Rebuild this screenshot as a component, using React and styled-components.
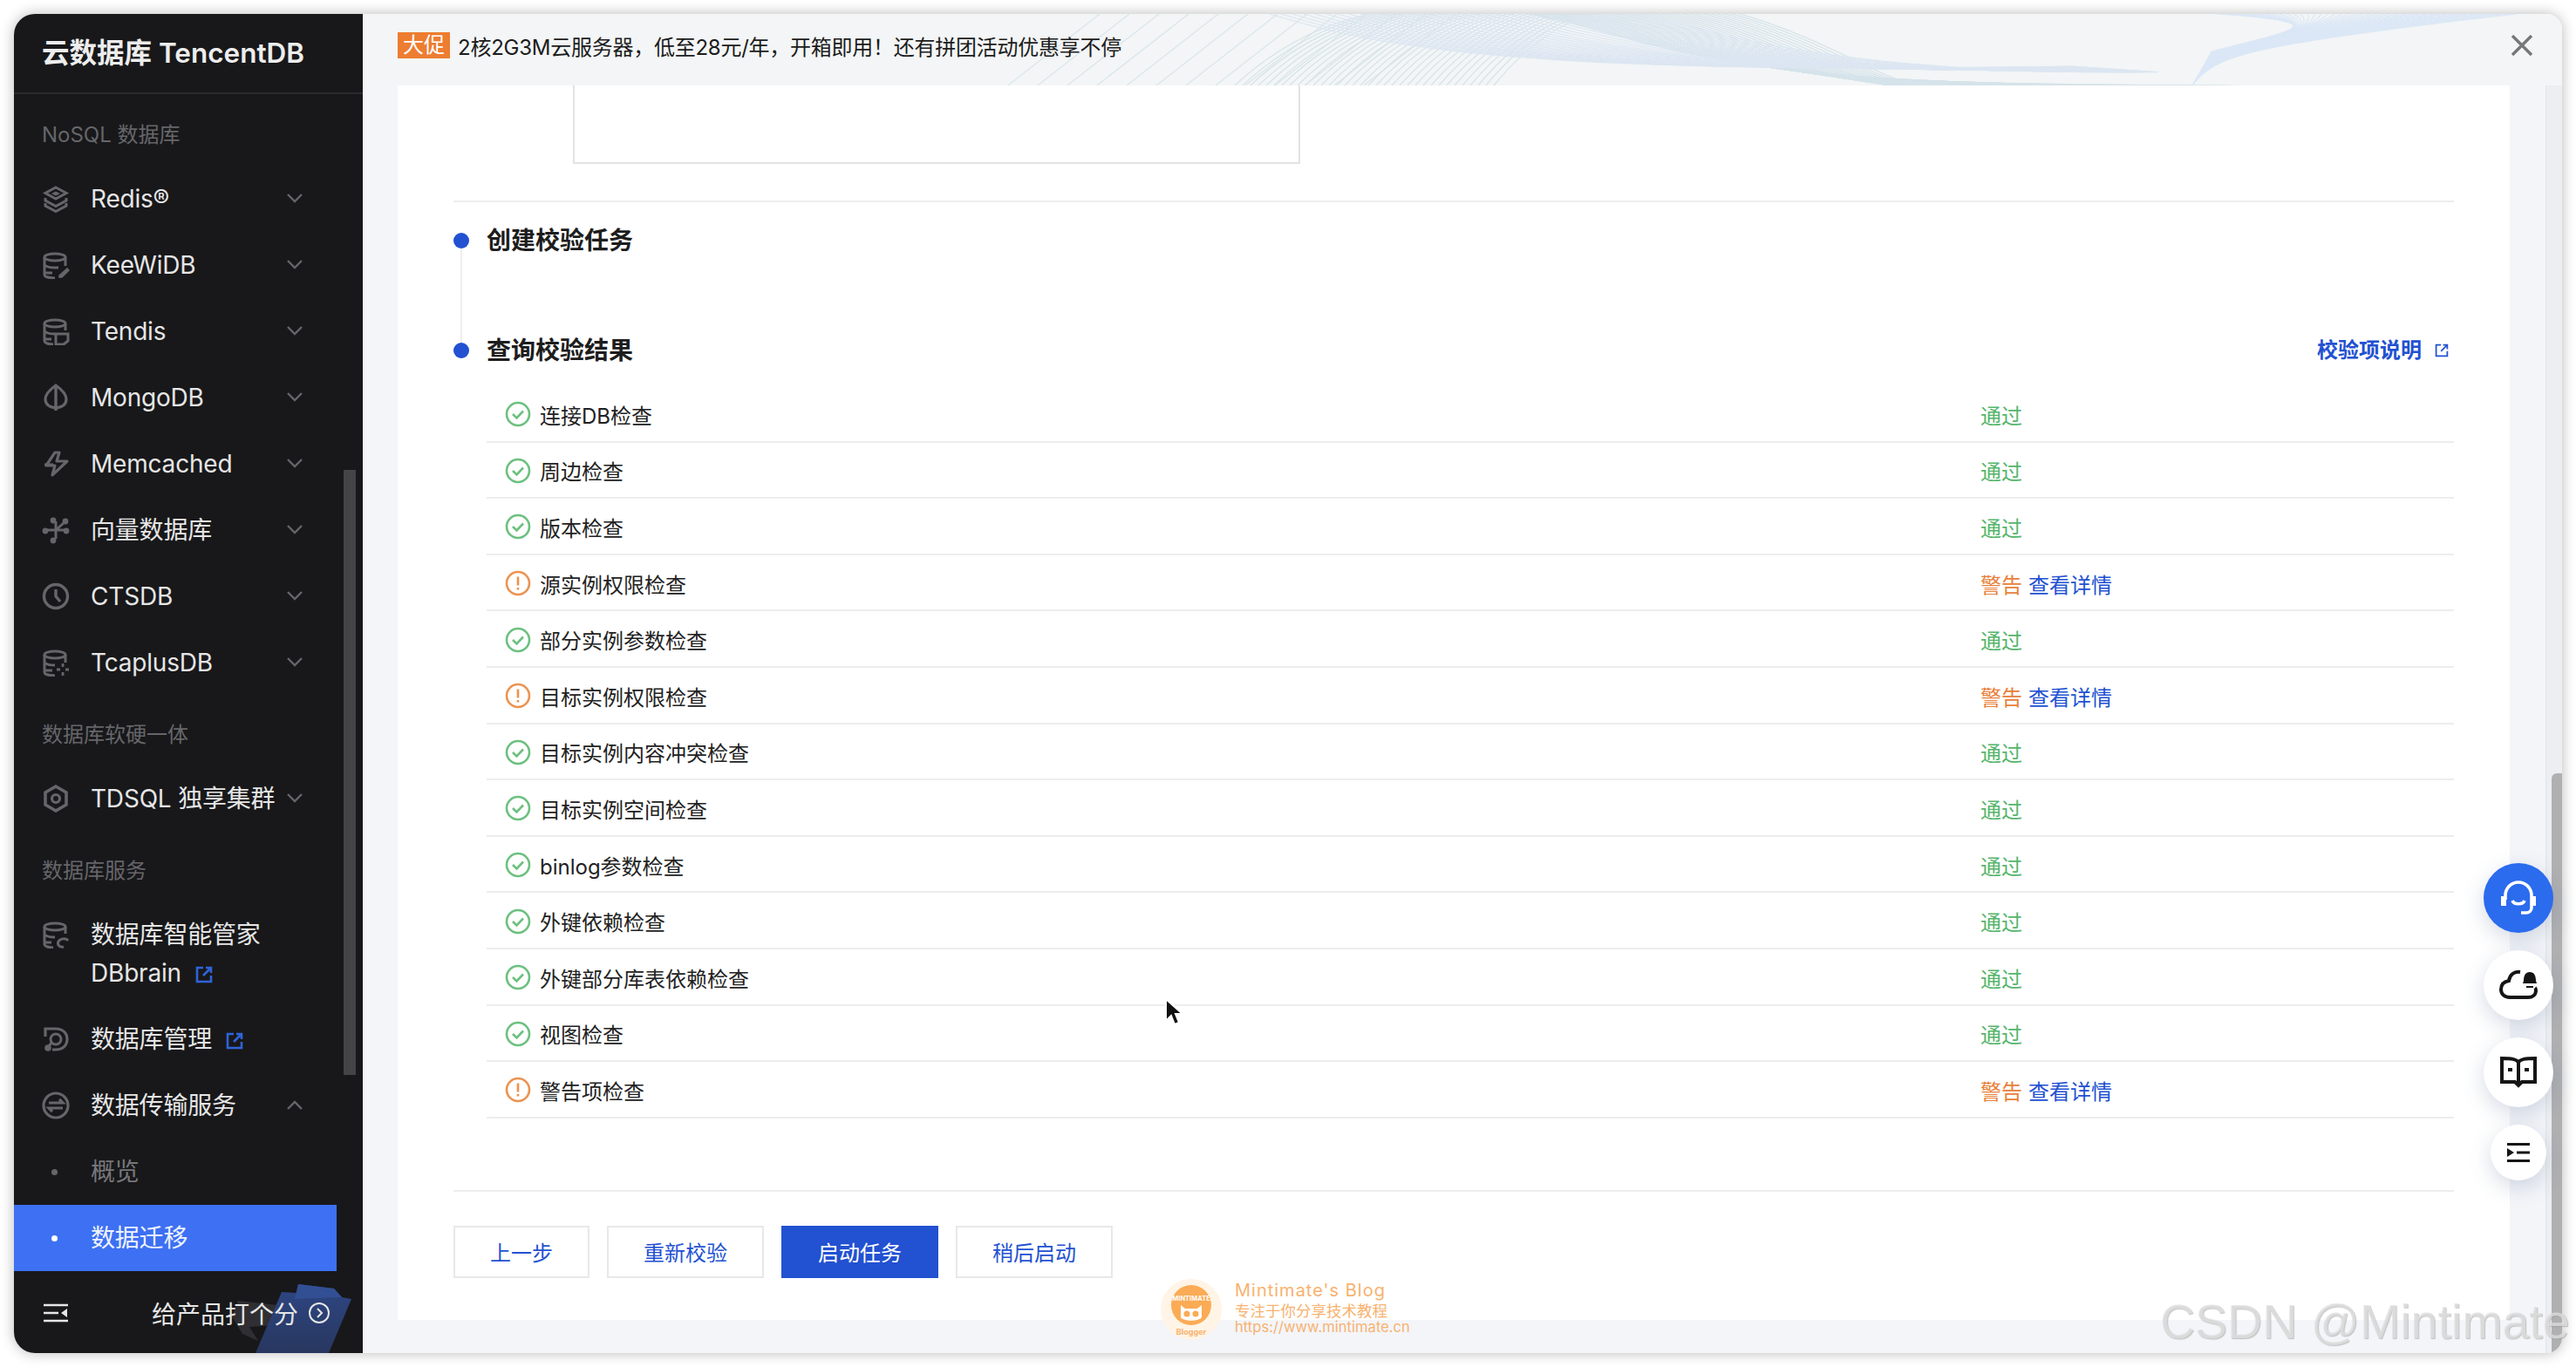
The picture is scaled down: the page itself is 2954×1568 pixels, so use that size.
import React from "react";
import styled, { createGlobalStyle } from "styled-components";

const Global = createGlobalStyle`
  html, body { margin: 0; padding: 0; background: #fff; }
  body { font-family: Inter, "Noto Sans CJK SC", "Noto Sans", sans-serif; }
  * { box-sizing: border-box; }
`;

const Page = styled.div`
  position: relative;
  width: 2954px;
  height: 1568px;
  padding: 16px;
  overflow: hidden;
  background: #fff;
`;
const Win = styled.div`
  position: relative;
  display: flex;
  width: 2922px;
  height: 1536px;
  border-radius: 24px 18px 18px 24px;
  overflow: hidden;
  box-shadow: 0 0 16px rgba(0, 0, 0, 0.28);
`;

/* sidebar */
const Side = styled.aside`
  position: relative;
  flex: none;
  width: 400px;
  display: flex;
  flex-direction: column;
  background: #18181a;
  color: #e6e6e6;
`;
const Brand = styled.div`
  flex: none;
  height: 92px;
  padding: 0 32px 6px;
  display: flex;
  align-items: center;
  font-size: 31.5px;
  font-weight: 600;
  color: #ededed;
  border-bottom: 2px solid #2a2a2c;
  white-space: nowrap;
`;
const Nav = styled.nav`
  position: relative;
  flex: 1;
  min-height: 0;
`;
const Thumb = styled.div`
  position: absolute;
  right: 8px;
  top: 431px;
  width: 14px;
  height: 694px;
  background: #444446;
`;
const Label = styled.div`
  padding: ${(p) => (p.$first ? "29px" : "27px")} 32px 17px;
  font-size: 24px;
  line-height: 36px;
  color: #66666a;
`;
const Item = styled.div`
  display: grid;
  grid-template-columns: 32px minmax(0, 1fr) 18px;
  column-gap: 24px;
  align-items: ${(p) => (p.$tall ? "start" : "center")};
  width: 370px;
  min-height: 76px;
  padding: ${(p) => (p.$tall ? "16px 39px 16px 32px" : "0 39px 0 32px")};
  font-size: 28px;
  line-height: 44px;
  letter-spacing: -0.2px;
  color: ${(p) => (p.$sub ? "#77777a" : "#e6e6e6")};
  white-space: nowrap;
  background: ${(p) => (p.$active ? "#3d70f2" : "transparent")};
  ${(p) => p.$active && "color: #eef3ff;"}
`;
const IconBox = styled.span`
  display: flex;
  width: 32px;
  height: ${(p) => (p.$tall ? "44px" : "32px")};
  align-items: center;
  justify-content: center;
  color: #66666a;
`;
const Bullet = styled.i`
  display: block;
  width: 7px;
  height: 7px;
  margin-left: -3px;
  border-radius: 50%;
  background: ${(p) => (p.$on ? "#fff" : "#66666a")};
`;
const Ext = styled.span`
  display: inline-flex;
  margin-left: 16px;
  vertical-align: -2px;
  color: #2f63d9;
`;
const Foot = styled.div`
  position: relative;
  flex: none;
  height: 92px;
  padding: 0 38px 0 34px;
  display: flex;
  align-items: center;
  font-size: 28px;
  color: #e6e6e6;
  overflow: hidden;
`;
const FootArt = styled.svg`
  position: absolute;
  left: 0;
  top: 0;
`;
const FootText = styled.span`
  position: relative;
  margin-left: auto;
  display: flex;
  align-items: center;
  gap: 12px;
`;

/* main */
const Main = styled.main`
  flex: 1;
  min-width: 0;
  display: flex;
  flex-direction: column;
  background: #f3f5f9;
`;
const Banner = styled.header`
  position: relative;
  flex: none;
  height: 82px;
  padding: 0 34px 10px 40px;
  display: flex;
  align-items: center;
  background: #f3f5f6;
  overflow: hidden;
  font-size: 24px;
  color: #1c1c1c;
`;
const Waves = styled.svg`
  position: absolute;
  left: 0;
  top: 0;
`;
const Tag = styled.span`
  position: relative;
  width: 60px;
  height: 30px;
  background: #ed7d31;
  color: #fff;
  line-height: 30px;
  text-align: center;
  margin-right: 9px;
`;
const Promo = styled.span`
  position: relative;
  flex: 1;
  white-space: nowrap;
  letter-spacing: -0.25px;
`;
const Close = styled.svg`
  position: relative;
  display: block;
`;
const Body = styled.div`
  position: relative;
  flex: 1;
  min-height: 0;
  padding: 0 0 38px 40px;
  display: flex;
`;
const Track = styled.div`
  position: absolute;
  right: 0;
  top: 0;
  bottom: 0;
  width: 19px;
  background: #eceef1;
  border-left: 1px solid #e3e5e9;
`;
const BarThumb = styled.div`
  position: absolute;
  right: 0;
  top: 789px;
  bottom: 0;
  width: 12px;
  border-radius: 6px 0 0 0;
  background: #b0b0b2;
`;
const Card = styled.section`
  flex: none;
  width: 2422px;
  padding: 0 64px;
  background: #fff;
  display: flex;
  flex-direction: column;
`;
const Frame = styled.div`
  width: 834px;
  height: 90px;
  margin-left: 137px;
  border: 2px solid #e3e3e3;
  border-top: 0;
`;
const Rule = styled.hr`
  flex: none;
  width: 100%;
  height: 2px;
  margin: ${(p) => p.$m};
  border: 0;
  background: #ededed;
`;
const Step = styled.div`
  display: grid;
  grid-template-columns: 18px 1fr;
  column-gap: 20px;
`;
const Rail = styled.div`
  display: flex;
  flex-direction: column;
  align-items: center;
  padding-top: 11px;
`;
const Dot = styled.i`
  display: block;
  flex: none;
  width: 18px;
  height: 18px;
  border-radius: 50%;
  background: #2251d1;
`;
const RailLine = styled.i`
  display: block;
  flex: 1;
  width: 2px;
  margin-bottom: -11px;
  background: #eeeeee;
`;
const StepHead = styled.div`
  height: ${(p) => p.$h || "40px"};
  display: flex;
  justify-content: space-between;
  align-items: ${(p) => (p.$h ? "flex-start" : "center")};
`;
const StepTitle = styled.h3`
  margin: 0;
  font-size: 28px;
  line-height: 40px;
  font-weight: 700;
  color: #1d1d1d;
`;
const Doc = styled.a`
  display: flex;
  align-items: center;
  gap: 15px;
  padding-right: 6px;
  font-size: 24px;
  line-height: 40px;
  font-weight: 600;
  color: #2251d1;
`;
const Rows = styled.div`
  margin-top: 21px;
`;
const Row = styled.div`
  display: grid;
  grid-template-columns: 1713px 1fr;
  align-items: center;
  height: 64.6px;
  padding-top: 2px;
  border-bottom: 2px solid #ededed;
  font-size: 24px;
  color: #222;
`;
const Check = styled.div`
  display: flex;
  align-items: center;
  gap: 10px;
  padding-left: 21px;
`;
const Status = styled.div`
  display: flex;
  gap: 7px;
  color: ${(p) => (p.$warn ? "#e8803a" : "#55b56c")};
`;
const Detail = styled.a`
  color: #2251d1;
`;
const Actions = styled.div`
  display: flex;
  gap: 20px;
`;
const Btn = styled.button`
  width: ${(p) => p.$w || "180px"};
  height: 60px;
  padding: 0;
  border: 2px solid ${(p) => (p.$primary ? "#2251d1" : "#e8e8e8")};
  background: ${(p) => (p.$primary ? "#2251d1" : "#fff")};
  color: ${(p) => (p.$primary ? "#fff" : "#2251d1")};
  font: inherit;
  font-size: 24px;
`;

/* overlays */
const Floats = styled.div`
  position: absolute;
  left: 2848px;
  top: 990px;
  width: 80px;
  display: flex;
  flex-direction: column;
  align-items: center;
  gap: 20px;
`;
const Fab = styled.div`
  width: ${(p) => (p.$small ? "64px" : "80px")};
  height: ${(p) => (p.$small ? "64px" : "80px")};
  display: flex;
  align-items: center;
  justify-content: center;
  border-radius: 50%;
  background: ${(p) => (p.$blue ? "#2b6bee" : "#fff")};
  color: ${(p) => (p.$blue ? "#fff" : "#151515")};
  box-shadow: 0 8px 24px rgba(70, 90, 130, 0.22);
`;
const Cursor = styled.svg`
  position: absolute;
  left: 1330px;
  top: 1140px;
`;
const Stamp = styled.div`
  position: absolute;
  left: 1330px;
  top: 1462px;
  display: flex;
  gap: 14px;
  color: #f7b26f;
`;
const StampLogo = styled.svg`
  flex: none;
  margin-top: 4px;
`;
const StampLines = styled.div`
  display: flex;
  flex-direction: column;
  padding-top: 5px;
`;
const StampTitle = styled.span`
  font-size: 20px;
  line-height: 26px;
  letter-spacing: 1px;
  white-space: nowrap;
`;
const StampSub = styled.span`
  font-size: 17.5px;
  line-height: 22px;
  white-space: nowrap;
`;
const StampUrl = styled.span`
  font-size: 16.6px;
  line-height: 15px;
  white-space: nowrap;
`;
const Mark = styled.div`
  position: absolute;
  left: 2477px;
  top: 1480px;
  font-family: "Liberation Sans", sans-serif;
  font-size: 55.5px;
  line-height: 72px;
  white-space: nowrap;
  color: rgba(225, 225, 225, 0.75);
  text-shadow: 1px 1px 1px rgba(150, 150, 150, 0.55);
`;

/* icons */
const S = ({ size = 32, vb = "0 0 32 32", children, ...r }) => (
  <svg width={size} height={size} viewBox={vb} fill="none" stroke="currentColor" strokeWidth="3" {...r}>
    {children}
  </svg>
);
const Ico = {
  redis: (
    <S>
      <path d="M16 3 28 9.5 16 16 4 9.5Z" />
      <path d="M16 7.5 21 10 16 12.5 11 10Z" fill="currentColor" stroke="none" />
      <path d="M4 15v3l12 6.5L28 18v-3M4 21v3l12 6.5L28 24v-3" strokeWidth="3" />
    </S>
  ),
  kee: (
    <S>
      <ellipse cx="15" cy="7" rx="12" ry="4" />
      <path d="M3 7v20c0 2 4 4 12 4M27 7v10M3 16c2 2 7 3 12 3h4M3 25h9" />
      <path d="m21 30 9-8 2 2-8 8h-3z" fill="currentColor" strokeWidth="1.5" transform="translate(-1 -2)" />
    </S>
  ),
  tendis: (
    <S>
      <ellipse cx="15" cy="7" rx="12" ry="4" />
      <path d="M3 7v20c0 2 4 4 10 4M27 7v8M3 16c2 2 7 3 12 3M3 25h8" />
      <path d="M16 19h14v8l-5 4h-9z" fill="#18181a" strokeWidth="3" />
    </S>
  ),
  mongo: (
    <S>
      <path d="M16 2C9 7 4 12 4 18c0 6 5 9 12 10 7-1 12-4 12-10 0-6-5-11-12-16Z" strokeWidth="3.2" />
      <path d="M16 3v28" strokeWidth="3.4" />
    </S>
  ),
  mem: (
    <S>
      <path d="M15 3 5 18h10l-3 11 17-16H17l3-10z" strokeWidth="3.2" strokeLinejoin="round" />
      <path d="M3 17h10" strokeWidth="3" />
    </S>
  ),
  vector: (
    <S>
      <path d="M16 6v9M16 17v9M4 16h24M26 7 16 16" strokeWidth="3" />
      <circle cx="13" cy="5" r="3.4" fill="currentColor" stroke="none" />
      <circle cx="27" cy="6" r="3.4" fill="currentColor" stroke="none" />
      <circle cx="4" cy="17" r="3.4" fill="currentColor" stroke="none" />
      <circle cx="28" cy="17" r="3.4" fill="currentColor" stroke="none" />
      <circle cx="13" cy="28" r="3.4" fill="currentColor" stroke="none" />
    </S>
  ),
  clock: (
    <S>
      <circle cx="16" cy="16" r="13.5" strokeWidth="3.4" />
      <path d="M16 8v8l5 6" strokeWidth="3.4" />
    </S>
  ),
  tcaplus: (
    <S>
      <ellipse cx="15" cy="7" rx="12" ry="4" />
      <path d="M3 7v20c0 2 4 4 12 4M27 7v9M3 16c2 2 7 3 12 3M3 25h9" />
      <path d="M24 17v4M24 27v4M17 24h4M27 24h4" strokeWidth="2.8" />
    </S>
  ),
  tdsql: (
    <S>
      <path d="M16 2 28 9v14l-12 7-12-7V9z" strokeWidth="3.6" />
      <circle cx="16" cy="16" r="4.5" strokeWidth="3.2" />
    </S>
  ),
  brain: (
    <S>
      <ellipse cx="15" cy="7" rx="12" ry="4" />
      <path d="M3 7v20c0 2 4 4 10 4M27 7v8M3 16c2 2 7 3 12 3M3 25h8" />
      <path d="M30 23c-2-3-9-3-11 1-2 4 2 7 6 6" strokeWidth="3" />
    </S>
  ),
  manage: (
    <S>
      <path d="M4 13V4h12c8 0 13 5 13 12s-5 12-13 12h-4" strokeWidth="3.2" />
      <circle cx="16" cy="16" r="6" strokeWidth="3" />
      <circle cx="7" cy="26" r="3.8" fill="currentColor" stroke="none" />
      <path d="m8 24 4-5" strokeWidth="3" />
    </S>
  ),
  dts: (
    <S>
      <circle cx="16" cy="16" r="14" strokeWidth="3.2" />
      <path d="M8 13h16l-4-4M24 19H8l4 4" strokeWidth="3.2" />
    </S>
  ),
};
const Chevron = ({ up }) => (
  <svg width="18" height="18" viewBox="0 0 18 18" fill="none" stroke="#66666a" strokeWidth="2.4" style={{ marginTop: up ? 0 : -3 }}>
    <path d={up ? "M1 13 9 5l8 8" : "M1 5l8 8 8-8"} />
  </svg>
);
const ExtIcon = ({ size = 20, w = 2.6 }) => (
  <svg width={size} height={size} viewBox="0 0 20 20" fill="none" stroke="currentColor" strokeWidth={w}>
    <path d="M9 2H2v16h16v-7" />
    <path d="M9 11 17 3M12 2h6v6" />
  </svg>
);
const OkIcon = () => (
  <svg width="30" height="30" viewBox="0 0 30 30" fill="none" stroke="#6cc07f" strokeWidth="2.6">
    <circle cx="15" cy="15" r="13" />
    <path d="m9 15 4.5 4.5L21 11.5" />
  </svg>
);
const WarnIcon = () => (
  <svg width="30" height="30" viewBox="0 0 30 30" fill="none" stroke="#ec9350" strokeWidth="2.6">
    <circle cx="15" cy="15" r="13" />
    <path d="M15 7.5v10M15 20v2.5" />
  </svg>
);

const waveData = () => {
  const a = [];
  for (let i = 0; i < 13; i++) {
    const x = 740 + i * 34;
    a.push({ d: `M${x} 82 L${x + 105} 0`, c: "#d9e6e7" });
  }
  for (let i = 0; i < 34; i++) {
    const x = 1000 + i * 9;
    a.push({ d: `M${x} 82 C${x + 110} ${-20 - i} ${x + 250} ${-30} ${x + 420} ${20 + i * 1.1} S${x + 700} 70 ${x + 880} 84`, c: "#d5e3ea" });
  }
  for (let i = 0; i < 34; i++) {
    const x = 1040 + i * 13;
    a.push({ d: `M${x} 0 C${x + 130} 40 ${x + 300} 70 ${1960 + i * 3} ${60 + i * 0.2}`, c: "#dce6f2" });
  }
  for (let i = 0; i < 44; i++) {
    a.push({
      d: `M${2098 + i * 0.5} ${82 - i * 0.9} C${2120 + i * 2} ${50 - i * 0.7} ${2150 + i * 3} ${36 - i * 0.6} ${2470 - i * 8} 0`,
      c: "#dbe7f6",
    });
  }
  return a;
};

const nav = [
  { label: "NoSQL 数据库", first: true },
  { t: "Redis®", i: "redis" },
  { t: "KeeWiDB", i: "kee" },
  { t: "Tendis", i: "tendis" },
  { t: "MongoDB", i: "mongo" },
  { t: "Memcached", i: "mem" },
  { t: "向量数据库", i: "vector" },
  { t: "CTSDB", i: "clock" },
  { t: "TcaplusDB", i: "tcaplus" },
  { label: "数据库软硬一体" },
  { t: "TDSQL 独享集群", i: "tdsql" },
  { label: "数据库服务" },
];

const checks = [
  ["连接DB检查", 0],
  ["周边检查", 0],
  ["版本检查", 0],
  ["源实例权限检查", 1],
  ["部分实例参数检查", 0],
  ["目标实例权限检查", 1],
  ["目标实例内容冲突检查", 0],
  ["目标实例空间检查", 0],
  ["binlog参数检查", 0],
  ["外键依赖检查", 0],
  ["外键部分库表依赖检查", 0],
  ["视图检查", 0],
  ["警告项检查", 1],
];

export default function App() {
  return (
    <Page>
      <Global />
      <Win>
        <Side>
          <Brand>云数据库 TencentDB</Brand>
          <Nav>
            {nav.map((n, k) =>
              n.label ? (
                <Label key={k} $first={n.first}>{n.label}</Label>
              ) : (
                <Item key={k}>
                  <IconBox>{Ico[n.i]}</IconBox>
                  <span>{n.t}</span>
                  <Chevron />
                </Item>
              )
            )}
            <Item $tall>
              <IconBox $tall>{Ico.brain}</IconBox>
              <span>
                数据库智能管家
                <br />
                DBbrain
                <Ext><ExtIcon /></Ext>
              </span>
            </Item>
            <Item>
              <IconBox>{Ico.manage}</IconBox>
              <span>
                数据库管理
                <Ext><ExtIcon /></Ext>
              </span>
            </Item>
            <Item>
              <IconBox>{Ico.dts}</IconBox>
              <span>数据传输服务</span>
              <Chevron up />
            </Item>
            <Item $sub>
              <IconBox><Bullet /></IconBox>
              <span>概览</span>
            </Item>
            <Item $active>
              <IconBox><Bullet $on /></IconBox>
              <span>数据迁移</span>
            </Item>
            <Thumb />
          </Nav>
          <Foot>
            <FootArt width="400" height="92" viewBox="0 0 400 92">
              <defs>
                <linearGradient id="chair" x1="0" y1="0" x2="0" y2="1">
                  <stop offset="0" stopColor="#2e4684" />
                  <stop offset="1" stopColor="#28375f" />
                </linearGradient>
              </defs>
              <polygon points="257,32 330,40 300,60 270,62 280,78 262,70 250,50" fill="#2f2f33" />
              <polygon points="277,92 307,22 324,23 326,13 367,18 376,28 387,30 361,92" fill="url(#chair)" />
              <polygon points="326,13 367,18 376,28 322,30" fill="#324f93" />
            </FootArt>
            <svg width="28" height="22" viewBox="0 0 28 22" fill="none" stroke="#e6e6e6" strokeWidth="2.4" style={{ position: "relative" }}>
              <path d="M0 2h28M0 11h17M0 20h28" />
              <path d="M27 6v10l-7-5z" fill="#e6e6e6" stroke="none" />
            </svg>
            <FootText>
              给产品打个分
              <svg width="24" height="24" viewBox="0 0 24 24" fill="none" stroke="#e6e6e6" strokeWidth="2">
                <circle cx="12" cy="12" r="11" />
                <path d="m10 7 5 5-5 5" />
              </svg>
            </FootText>
          </Foot>
        </Side>
        <Main>
          <Banner>
            <Waves width="2522" height="82" viewBox="0 0 2522 82" fill="none">
              {waveData().map((w, i) => (
                <path key={i} d={w.d} stroke={w.c} strokeWidth="1.2" />
              ))}
            </Waves>
            <Tag>大促</Tag>
            <Promo>2核2G3M云服务器，低至28元/年，开箱即用！还有拼团活动优惠享不停</Promo>
            <Close width="24" height="24" viewBox="0 0 24 24" fill="none" stroke="#777" strokeWidth="3.4">
              <path d="m1 1 22 22M23 1 1 23" />
            </Close>
          </Banner>
          <Body>
            <Card>
              <Frame />
              <Rule $m="42px 0 24px" />
              <Step>
                <Rail>
                  <Dot />
                  <RailLine />
                </Rail>
                <StepHead $h="126px">
                  <StepTitle>创建校验任务</StepTitle>
                </StepHead>
              </Step>
              <Step>
                <Rail>
                  <Dot />
                </Rail>
                <div>
                  <StepHead>
                    <StepTitle>查询校验结果</StepTitle>
                    <Doc>
                      校验项说明
                      <ExtIcon size={16} w={2.2} />
                    </Doc>
                  </StepHead>
                  <Rows>
                    {checks.map(([name, warn]) => (
                      <Row key={name}>
                        <Check>
                          {warn ? <WarnIcon /> : <OkIcon />}
                          {name}
                        </Check>
                        <Status $warn={warn}>
                          {warn ? "警告" : "通过"}
                          {warn ? <Detail>查看详情</Detail> : null}
                        </Status>
                      </Row>
                    ))}
                  </Rows>
                </div>
              </Step>
              <Rule $m="82px 0 39px" />
              <Actions>
                <Btn $w="156px">上一步</Btn>
                <Btn>重新校验</Btn>
                <Btn $primary>启动任务</Btn>
                <Btn>稍后启动</Btn>
              </Actions>
            </Card>
            <Track />
            <BarThumb />
          </Body>
        </Main>
      </Win>
      <Floats>
        <Fab $blue>
          <svg width="44" height="44" viewBox="0 0 44 44" fill="none" stroke="currentColor" strokeWidth="3.6">
            <path d="M7 24v-5a15 15 0 0 1 30 0v14c0 4-3 6-6 6h-6" />
            <path d="M2 20h6v11H2zM36 20h6v11h-6z" fill="currentColor" stroke="none" />
            <path d="M15 25c2 5 12 5 14 0" />
          </svg>
        </Fab>
        <Fab>
          <svg width="44" height="44" viewBox="0 0 44 44" fill="none" stroke="currentColor" strokeWidth="4">
            <path d="M24 7c-7-1-12 3-13 10-6 1-9 5-9 10 0 5 4 9 10 9h21c5 0 9-3 9-8 0-1 0-2-1-3" />
            <path d="M28 17c0-6 2-10 7-10s7 4 7 10l1 3H27z" fill="currentColor" stroke="none" />
            <path d="M31 24h8" strokeWidth="2" />
          </svg>
        </Fab>
        <Fab>
          <svg width="42" height="36" viewBox="0 0 42 36" fill="none" stroke="currentColor" strokeWidth="4">
            <path d="M21 6C18 3 14 2 2 2v27h15l4 4 4-4h15V2C28 2 24 3 21 6Zm0 0v24" />
            <path d="M9 13h5v4H9zM28 13h5v4h-5z" fill="currentColor" stroke="none" />
          </svg>
        </Fab>
        <Fab $small>
          <svg width="26" height="22" viewBox="0 0 26 22" fill="none" stroke="currentColor" strokeWidth="3">
            <path d="M0 1.5h26M11 11h15M0 20.5h26" />
            <path d="M0 6v10l8-5z" fill="currentColor" stroke="none" />
          </svg>
        </Fab>
      </Floats>
      <Cursor width="30" height="42" viewBox="0 0 30 42">
        <path d="M7 6v25l6-6 4 10 5-2-4-10h8z" fill="#111" stroke="#fff" strokeWidth="2" />
      </Cursor>
      <Stamp>
        <StampLogo width="72" height="72" viewBox="0 0 72 72">
          <circle cx="36" cy="36" r="35" fill="#fff4e6" />
          <circle cx="36" cy="31" r="23" fill="#fbab55" />
          <text x="36" y="26" textAnchor="middle" fontSize="7.5" fontWeight="700" fill="#fff" fontFamily="Inter, sans-serif">MINTIMATE</text>
          <path d="M24 45V31l5 4h14l5-4v14c-3 5-21 5-24 0Z" fill="#fff" />
          <circle cx="31" cy="41" r="3.5" fill="#fbab55" />
          <circle cx="41" cy="41" r="3.5" fill="#fbab55" />
          <text x="36" y="65" textAnchor="middle" fontSize="9" fontWeight="700" fill="#f7b26f" fontFamily="Inter, sans-serif">Blogger</text>
        </StampLogo>
        <StampLines>
          <StampTitle>Mintimate's Blog</StampTitle>
          <StampSub>专注于你分享技术教程</StampSub>
          <StampUrl>https://www.mintimate.cn</StampUrl>
        </StampLines>
      </Stamp>
      <Mark>CSDN @Mintimate</Mark>
    </Page>
  );
}
